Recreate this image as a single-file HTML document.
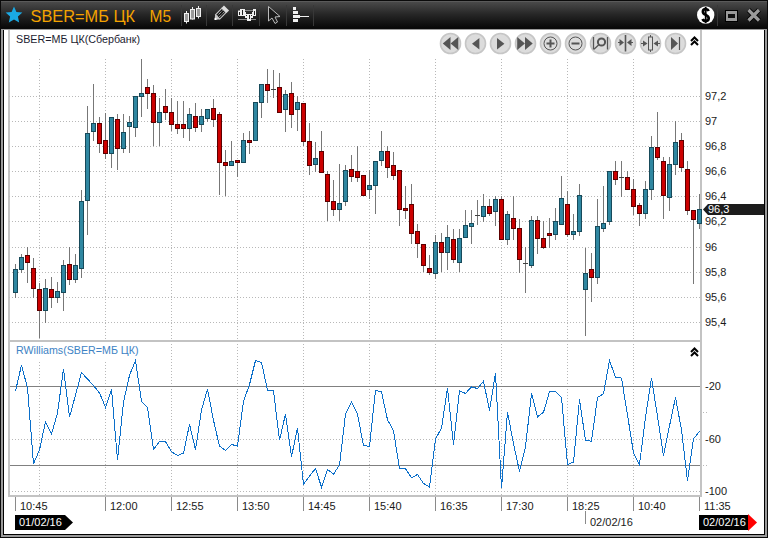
<!DOCTYPE html><html><head><meta charset="utf-8"><style>html,body{margin:0;padding:0;background:#0a0a0a;width:768px;height:538px;overflow:hidden}svg{display:block}text{font-family:"Liberation Sans",sans-serif}</style></head><body>
<svg width="768" height="538" viewBox="0 0 768 538">
<defs><linearGradient id="tb" x1="0" y1="0" x2="0" y2="1"><stop offset="0" stop-color="#4c4c4c"/><stop offset="0.5" stop-color="#262626"/><stop offset="1" stop-color="#080808"/></linearGradient></defs>
<g shape-rendering="crispEdges">
<rect x="0" y="0" width="768" height="538" fill="#0a0a0a"/>
<rect x="1" y="1" width="766" height="27" fill="url(#tb)"/>
<rect x="1" y="1" width="766" height="1" fill="#5a5a5a"/>
<rect x="1" y="29" width="766" height="508" fill="#9a9a9a"/>
<rect x="3" y="30" width="762" height="505" fill="#000"/>
<rect x="4" y="30" width="760" height="504" fill="#fff"/>
<rect x="8" y="30" width="2" height="467" fill="#c3c3c3"/>
<rect x="700" y="30" width="2" height="467" fill="#c3c3c3"/>
<rect x="8" y="495" width="694" height="2" fill="#c3c3c3"/>
<rect x="8" y="340" width="694" height="2" fill="#c3c3c3"/>
<line x1="9" y1="96.5" x2="700" y2="96.5" stroke="#b8b8b8" stroke-width="1" stroke-dasharray="1 2"/>
<line x1="9" y1="121.5" x2="700" y2="121.5" stroke="#b8b8b8" stroke-width="1" stroke-dasharray="1 2"/>
<line x1="9" y1="146.5" x2="700" y2="146.5" stroke="#b8b8b8" stroke-width="1" stroke-dasharray="1 2"/>
<line x1="9" y1="171.5" x2="700" y2="171.5" stroke="#b8b8b8" stroke-width="1" stroke-dasharray="1 2"/>
<line x1="9" y1="196.5" x2="700" y2="196.5" stroke="#b8b8b8" stroke-width="1" stroke-dasharray="1 2"/>
<line x1="9" y1="221.5" x2="700" y2="221.5" stroke="#b8b8b8" stroke-width="1" stroke-dasharray="1 2"/>
<line x1="9" y1="247.5" x2="700" y2="247.5" stroke="#b8b8b8" stroke-width="1" stroke-dasharray="1 2"/>
<line x1="9" y1="272.5" x2="700" y2="272.5" stroke="#b8b8b8" stroke-width="1" stroke-dasharray="1 2"/>
<line x1="9" y1="297.5" x2="700" y2="297.5" stroke="#b8b8b8" stroke-width="1" stroke-dasharray="1 2"/>
<line x1="9" y1="322.5" x2="700" y2="322.5" stroke="#b8b8b8" stroke-width="1" stroke-dasharray="1 2"/>
<line x1="39.5" y1="59" x2="39.5" y2="340" stroke="#b8b8b8" stroke-width="1" stroke-dasharray="1 2"/>
<line x1="39.5" y1="362" x2="39.5" y2="495" stroke="#b8b8b8" stroke-width="1" stroke-dasharray="1 2"/>
<line x1="105.5" y1="59" x2="105.5" y2="340" stroke="#b8b8b8" stroke-width="1" stroke-dasharray="1 2"/>
<line x1="105.5" y1="362" x2="105.5" y2="495" stroke="#b8b8b8" stroke-width="1" stroke-dasharray="1 2"/>
<line x1="171.5" y1="59" x2="171.5" y2="340" stroke="#b8b8b8" stroke-width="1" stroke-dasharray="1 2"/>
<line x1="171.5" y1="344" x2="171.5" y2="495" stroke="#b8b8b8" stroke-width="1" stroke-dasharray="1 2"/>
<line x1="237.5" y1="59" x2="237.5" y2="340" stroke="#b8b8b8" stroke-width="1" stroke-dasharray="1 2"/>
<line x1="237.5" y1="344" x2="237.5" y2="495" stroke="#b8b8b8" stroke-width="1" stroke-dasharray="1 2"/>
<line x1="303.5" y1="59" x2="303.5" y2="340" stroke="#b8b8b8" stroke-width="1" stroke-dasharray="1 2"/>
<line x1="303.5" y1="344" x2="303.5" y2="495" stroke="#b8b8b8" stroke-width="1" stroke-dasharray="1 2"/>
<line x1="369.5" y1="59" x2="369.5" y2="340" stroke="#b8b8b8" stroke-width="1" stroke-dasharray="1 2"/>
<line x1="369.5" y1="344" x2="369.5" y2="495" stroke="#b8b8b8" stroke-width="1" stroke-dasharray="1 2"/>
<line x1="435.5" y1="59" x2="435.5" y2="340" stroke="#b8b8b8" stroke-width="1" stroke-dasharray="1 2"/>
<line x1="435.5" y1="344" x2="435.5" y2="495" stroke="#b8b8b8" stroke-width="1" stroke-dasharray="1 2"/>
<line x1="501.5" y1="59" x2="501.5" y2="340" stroke="#b8b8b8" stroke-width="1" stroke-dasharray="1 2"/>
<line x1="501.5" y1="344" x2="501.5" y2="495" stroke="#b8b8b8" stroke-width="1" stroke-dasharray="1 2"/>
<line x1="567.5" y1="59" x2="567.5" y2="340" stroke="#b8b8b8" stroke-width="1" stroke-dasharray="1 2"/>
<line x1="567.5" y1="344" x2="567.5" y2="495" stroke="#b8b8b8" stroke-width="1" stroke-dasharray="1 2"/>
<line x1="633.5" y1="59" x2="633.5" y2="340" stroke="#b8b8b8" stroke-width="1" stroke-dasharray="1 2"/>
<line x1="633.5" y1="344" x2="633.5" y2="495" stroke="#b8b8b8" stroke-width="1" stroke-dasharray="1 2"/>
<line x1="9" y1="439.5" x2="700" y2="439.5" stroke="#b8b8b8" stroke-width="1" stroke-dasharray="1 2"/>
<line x1="9" y1="491.5" x2="700" y2="491.5" stroke="#b8b8b8" stroke-width="1" stroke-dasharray="1 2"/>
<rect x="703" y="412" width="1" height="1" fill="#b8b8b8"/><rect x="706" y="412" width="1" height="1" fill="#b8b8b8"/><rect x="703" y="465" width="1" height="1" fill="#b8b8b8"/><rect x="706" y="465" width="1" height="1" fill="#b8b8b8"/>
<rect x="10" y="386" width="690" height="1" fill="#808080"/>
<rect x="10" y="465" width="690" height="1" fill="#808080"/>
<rect x="15" y="264" width="1" height="34" fill="#777777"/>
<rect x="13" y="269" width="5" height="24" fill="#174a5a"/>
<rect x="14" y="270" width="3" height="22" fill="#2f87a1"/>
<rect x="21" y="254" width="1" height="19" fill="#777777"/>
<rect x="19" y="257" width="5" height="13" fill="#174a5a"/>
<rect x="20" y="258" width="3" height="11" fill="#2f87a1"/>
<rect x="27" y="247" width="1" height="36" fill="#777777"/>
<rect x="25" y="255" width="5" height="8" fill="#5c0000"/>
<rect x="26" y="256" width="3" height="6" fill="#cc0000"/>
<rect x="33" y="258" width="1" height="40" fill="#777777"/>
<rect x="31" y="268" width="5" height="21" fill="#5c0000"/>
<rect x="32" y="269" width="3" height="19" fill="#cc0000"/>
<rect x="39" y="283" width="1" height="55" fill="#777777"/>
<rect x="37" y="289" width="5" height="22" fill="#5c0000"/>
<rect x="38" y="290" width="3" height="20" fill="#cc0000"/>
<rect x="45" y="279" width="1" height="44" fill="#777777"/>
<rect x="43" y="288" width="5" height="23" fill="#174a5a"/>
<rect x="44" y="289" width="3" height="21" fill="#2f87a1"/>
<rect x="51" y="277" width="1" height="31" fill="#777777"/>
<rect x="49" y="289" width="5" height="9" fill="#5c0000"/>
<rect x="50" y="290" width="3" height="7" fill="#cc0000"/>
<rect x="57" y="282" width="1" height="21" fill="#777777"/>
<rect x="55" y="291" width="5" height="7" fill="#174a5a"/>
<rect x="56" y="292" width="3" height="5" fill="#2f87a1"/>
<rect x="63" y="260" width="1" height="51" fill="#777777"/>
<rect x="61" y="265" width="5" height="28" fill="#174a5a"/>
<rect x="62" y="266" width="3" height="26" fill="#2f87a1"/>
<rect x="69" y="247" width="1" height="38" fill="#777777"/>
<rect x="67" y="264" width="5" height="16" fill="#5c0000"/>
<rect x="68" y="265" width="3" height="14" fill="#cc0000"/>
<rect x="75" y="254" width="1" height="29" fill="#777777"/>
<rect x="73" y="265" width="5" height="15" fill="#174a5a"/>
<rect x="74" y="266" width="3" height="13" fill="#2f87a1"/>
<rect x="81" y="190" width="1" height="88" fill="#777777"/>
<rect x="79" y="201" width="5" height="68" fill="#174a5a"/>
<rect x="80" y="202" width="3" height="66" fill="#2f87a1"/>
<rect x="87" y="106" width="1" height="129" fill="#777777"/>
<rect x="85" y="133" width="5" height="68" fill="#174a5a"/>
<rect x="86" y="134" width="3" height="66" fill="#2f87a1"/>
<rect x="93" y="84" width="1" height="57" fill="#777777"/>
<rect x="91" y="123" width="5" height="9" fill="#174a5a"/>
<rect x="92" y="124" width="3" height="7" fill="#2f87a1"/>
<rect x="99" y="117" width="1" height="36" fill="#777777"/>
<rect x="97" y="123" width="5" height="21" fill="#5c0000"/>
<rect x="98" y="124" width="3" height="19" fill="#cc0000"/>
<rect x="105" y="113" width="1" height="46" fill="#777777"/>
<rect x="103" y="140" width="5" height="14" fill="#5c0000"/>
<rect x="104" y="141" width="3" height="12" fill="#cc0000"/>
<rect x="111" y="117" width="1" height="51" fill="#777777"/>
<rect x="109" y="117" width="5" height="37" fill="#174a5a"/>
<rect x="110" y="118" width="3" height="35" fill="#2f87a1"/>
<rect x="117" y="114" width="1" height="56" fill="#777777"/>
<rect x="115" y="119" width="5" height="30" fill="#5c0000"/>
<rect x="116" y="120" width="3" height="28" fill="#cc0000"/>
<rect x="123" y="114" width="1" height="39" fill="#777777"/>
<rect x="121" y="132" width="5" height="17" fill="#174a5a"/>
<rect x="122" y="133" width="3" height="15" fill="#2f87a1"/>
<rect x="129" y="116" width="1" height="37" fill="#777777"/>
<rect x="127" y="122" width="5" height="5" fill="#174a5a"/>
<rect x="128" y="123" width="3" height="3" fill="#2f87a1"/>
<rect x="135" y="96" width="1" height="41" fill="#777777"/>
<rect x="133" y="96" width="5" height="32" fill="#174a5a"/>
<rect x="134" y="97" width="3" height="30" fill="#2f87a1"/>
<rect x="141" y="59" width="1" height="58" fill="#777777"/>
<rect x="139" y="93" width="5" height="4" fill="#174a5a"/>
<rect x="140" y="94" width="3" height="2" fill="#2f87a1"/>
<rect x="147" y="79" width="1" height="30" fill="#777777"/>
<rect x="145" y="87" width="5" height="7" fill="#5c0000"/>
<rect x="146" y="88" width="3" height="5" fill="#cc0000"/>
<rect x="153" y="85" width="1" height="61" fill="#777777"/>
<rect x="151" y="93" width="5" height="30" fill="#5c0000"/>
<rect x="152" y="94" width="3" height="28" fill="#cc0000"/>
<rect x="159" y="98" width="1" height="48" fill="#777777"/>
<rect x="157" y="112" width="5" height="11" fill="#174a5a"/>
<rect x="158" y="113" width="3" height="9" fill="#2f87a1"/>
<rect x="165" y="89" width="1" height="31" fill="#777777"/>
<rect x="163" y="106" width="5" height="7" fill="#5c0000"/>
<rect x="164" y="107" width="3" height="5" fill="#cc0000"/>
<rect x="171" y="98" width="1" height="33" fill="#777777"/>
<rect x="169" y="112" width="5" height="13" fill="#5c0000"/>
<rect x="170" y="113" width="3" height="11" fill="#cc0000"/>
<rect x="177" y="101" width="1" height="33" fill="#777777"/>
<rect x="175" y="124" width="5" height="5" fill="#5c0000"/>
<rect x="176" y="125" width="3" height="3" fill="#cc0000"/>
<rect x="183" y="101" width="1" height="37" fill="#777777"/>
<rect x="181" y="124" width="5" height="5" fill="#5c0000"/>
<rect x="182" y="125" width="3" height="3" fill="#cc0000"/>
<rect x="189" y="108" width="1" height="33" fill="#777777"/>
<rect x="187" y="114" width="5" height="15" fill="#174a5a"/>
<rect x="188" y="115" width="3" height="13" fill="#2f87a1"/>
<rect x="195" y="103" width="1" height="29" fill="#777777"/>
<rect x="193" y="116" width="5" height="12" fill="#5c0000"/>
<rect x="194" y="117" width="3" height="10" fill="#cc0000"/>
<rect x="201" y="109" width="1" height="23" fill="#777777"/>
<rect x="199" y="116" width="5" height="9" fill="#174a5a"/>
<rect x="200" y="117" width="3" height="7" fill="#2f87a1"/>
<rect x="207" y="109" width="1" height="13" fill="#777777"/>
<rect x="205" y="109" width="5" height="10" fill="#174a5a"/>
<rect x="206" y="110" width="3" height="8" fill="#2f87a1"/>
<rect x="213" y="99" width="1" height="28" fill="#777777"/>
<rect x="211" y="108" width="5" height="12" fill="#5c0000"/>
<rect x="212" y="109" width="3" height="10" fill="#cc0000"/>
<rect x="219" y="112" width="1" height="83" fill="#777777"/>
<rect x="217" y="114" width="5" height="49" fill="#5c0000"/>
<rect x="218" y="115" width="3" height="47" fill="#cc0000"/>
<rect x="225" y="150" width="1" height="46" fill="#777777"/>
<rect x="223" y="162" width="5" height="4" fill="#5c0000"/>
<rect x="224" y="163" width="3" height="2" fill="#cc0000"/>
<rect x="231" y="141" width="1" height="25" fill="#777777"/>
<rect x="229" y="161" width="5" height="5" fill="#174a5a"/>
<rect x="230" y="162" width="3" height="3" fill="#2f87a1"/>
<rect x="237" y="160" width="1" height="17" fill="#777777"/>
<rect x="235" y="160" width="5" height="3" fill="#5c0000"/>
<rect x="236" y="161" width="3" height="1" fill="#cc0000"/>
<rect x="243" y="133" width="1" height="30" fill="#777777"/>
<rect x="241" y="140" width="5" height="23" fill="#174a5a"/>
<rect x="242" y="141" width="3" height="21" fill="#2f87a1"/>
<rect x="249" y="131" width="1" height="23" fill="#777777"/>
<rect x="247" y="140" width="5" height="3" fill="#5c0000"/>
<rect x="248" y="141" width="3" height="1" fill="#cc0000"/>
<rect x="255" y="102" width="1" height="39" fill="#777777"/>
<rect x="253" y="102" width="5" height="39" fill="#174a5a"/>
<rect x="254" y="103" width="3" height="37" fill="#2f87a1"/>
<rect x="261" y="84" width="1" height="34" fill="#777777"/>
<rect x="259" y="84" width="5" height="19" fill="#174a5a"/>
<rect x="260" y="85" width="3" height="17" fill="#2f87a1"/>
<rect x="267" y="69" width="1" height="34" fill="#777777"/>
<rect x="265" y="84" width="5" height="7" fill="#5c0000"/>
<rect x="266" y="85" width="3" height="5" fill="#cc0000"/>
<rect x="273" y="70" width="1" height="28" fill="#777777"/>
<rect x="271" y="89" width="5" height="1" fill="#404040"/>
<rect x="279" y="73" width="1" height="40" fill="#777777"/>
<rect x="277" y="87" width="5" height="26" fill="#5c0000"/>
<rect x="278" y="88" width="3" height="24" fill="#cc0000"/>
<rect x="285" y="90" width="1" height="42" fill="#777777"/>
<rect x="283" y="94" width="5" height="16" fill="#174a5a"/>
<rect x="284" y="95" width="3" height="14" fill="#2f87a1"/>
<rect x="291" y="82" width="1" height="46" fill="#777777"/>
<rect x="289" y="93" width="5" height="22" fill="#5c0000"/>
<rect x="290" y="94" width="3" height="20" fill="#cc0000"/>
<rect x="297" y="96" width="1" height="35" fill="#777777"/>
<rect x="295" y="102" width="5" height="8" fill="#174a5a"/>
<rect x="296" y="103" width="3" height="6" fill="#2f87a1"/>
<rect x="303" y="103" width="1" height="43" fill="#777777"/>
<rect x="301" y="103" width="5" height="39" fill="#5c0000"/>
<rect x="302" y="104" width="3" height="37" fill="#cc0000"/>
<rect x="309" y="123" width="1" height="52" fill="#777777"/>
<rect x="307" y="141" width="5" height="25" fill="#5c0000"/>
<rect x="308" y="142" width="3" height="23" fill="#cc0000"/>
<rect x="315" y="142" width="1" height="30" fill="#777777"/>
<rect x="313" y="158" width="5" height="7" fill="#174a5a"/>
<rect x="314" y="159" width="3" height="5" fill="#2f87a1"/>
<rect x="321" y="131" width="1" height="42" fill="#777777"/>
<rect x="319" y="151" width="5" height="22" fill="#5c0000"/>
<rect x="320" y="152" width="3" height="20" fill="#cc0000"/>
<rect x="327" y="171" width="1" height="50" fill="#777777"/>
<rect x="325" y="174" width="5" height="28" fill="#5c0000"/>
<rect x="326" y="175" width="3" height="26" fill="#cc0000"/>
<rect x="333" y="180" width="1" height="36" fill="#777777"/>
<rect x="331" y="201" width="5" height="9" fill="#5c0000"/>
<rect x="332" y="202" width="3" height="7" fill="#cc0000"/>
<rect x="339" y="164" width="1" height="57" fill="#777777"/>
<rect x="337" y="203" width="5" height="7" fill="#174a5a"/>
<rect x="338" y="204" width="3" height="5" fill="#2f87a1"/>
<rect x="345" y="165" width="1" height="41" fill="#777777"/>
<rect x="343" y="170" width="5" height="32" fill="#174a5a"/>
<rect x="344" y="171" width="3" height="30" fill="#2f87a1"/>
<rect x="351" y="155" width="1" height="27" fill="#777777"/>
<rect x="349" y="169" width="5" height="8" fill="#5c0000"/>
<rect x="350" y="170" width="3" height="6" fill="#cc0000"/>
<rect x="357" y="146" width="1" height="36" fill="#777777"/>
<rect x="355" y="171" width="5" height="7" fill="#5c0000"/>
<rect x="356" y="172" width="3" height="5" fill="#cc0000"/>
<rect x="363" y="175" width="1" height="21" fill="#777777"/>
<rect x="361" y="175" width="5" height="21" fill="#5c0000"/>
<rect x="362" y="176" width="3" height="19" fill="#cc0000"/>
<rect x="369" y="170" width="1" height="29" fill="#777777"/>
<rect x="367" y="185" width="5" height="5" fill="#174a5a"/>
<rect x="368" y="186" width="3" height="3" fill="#2f87a1"/>
<rect x="375" y="161" width="1" height="53" fill="#777777"/>
<rect x="373" y="161" width="5" height="25" fill="#174a5a"/>
<rect x="374" y="162" width="3" height="23" fill="#2f87a1"/>
<rect x="381" y="131" width="1" height="35" fill="#777777"/>
<rect x="379" y="151" width="5" height="10" fill="#174a5a"/>
<rect x="380" y="152" width="3" height="8" fill="#2f87a1"/>
<rect x="387" y="146" width="1" height="32" fill="#777777"/>
<rect x="385" y="151" width="5" height="17" fill="#5c0000"/>
<rect x="386" y="152" width="3" height="15" fill="#cc0000"/>
<rect x="393" y="152" width="1" height="28" fill="#777777"/>
<rect x="391" y="165" width="5" height="11" fill="#5c0000"/>
<rect x="392" y="166" width="3" height="9" fill="#cc0000"/>
<rect x="399" y="170" width="1" height="56" fill="#777777"/>
<rect x="397" y="170" width="5" height="40" fill="#5c0000"/>
<rect x="398" y="171" width="3" height="38" fill="#cc0000"/>
<rect x="405" y="186" width="1" height="33" fill="#777777"/>
<rect x="403" y="208" width="5" height="3" fill="#5c0000"/>
<rect x="404" y="209" width="3" height="1" fill="#cc0000"/>
<rect x="411" y="184" width="1" height="60" fill="#777777"/>
<rect x="409" y="204" width="5" height="30" fill="#5c0000"/>
<rect x="410" y="205" width="3" height="28" fill="#cc0000"/>
<rect x="417" y="224" width="1" height="34" fill="#777777"/>
<rect x="415" y="231" width="5" height="13" fill="#5c0000"/>
<rect x="416" y="232" width="3" height="11" fill="#cc0000"/>
<rect x="423" y="244" width="1" height="28" fill="#777777"/>
<rect x="421" y="244" width="5" height="22" fill="#5c0000"/>
<rect x="422" y="245" width="3" height="20" fill="#cc0000"/>
<rect x="429" y="255" width="1" height="20" fill="#777777"/>
<rect x="427" y="268" width="5" height="5" fill="#5c0000"/>
<rect x="428" y="269" width="3" height="3" fill="#cc0000"/>
<rect x="435" y="235" width="1" height="44" fill="#777777"/>
<rect x="433" y="242" width="5" height="32" fill="#174a5a"/>
<rect x="434" y="243" width="3" height="30" fill="#2f87a1"/>
<rect x="441" y="233" width="1" height="39" fill="#777777"/>
<rect x="439" y="242" width="5" height="11" fill="#5c0000"/>
<rect x="440" y="243" width="3" height="9" fill="#cc0000"/>
<rect x="447" y="225" width="1" height="45" fill="#777777"/>
<rect x="445" y="237" width="5" height="16" fill="#174a5a"/>
<rect x="446" y="238" width="3" height="14" fill="#2f87a1"/>
<rect x="453" y="229" width="1" height="34" fill="#777777"/>
<rect x="451" y="239" width="5" height="21" fill="#5c0000"/>
<rect x="452" y="240" width="3" height="19" fill="#cc0000"/>
<rect x="459" y="229" width="1" height="43" fill="#777777"/>
<rect x="457" y="238" width="5" height="25" fill="#174a5a"/>
<rect x="458" y="239" width="3" height="23" fill="#2f87a1"/>
<rect x="465" y="210" width="1" height="28" fill="#777777"/>
<rect x="463" y="225" width="5" height="13" fill="#174a5a"/>
<rect x="464" y="226" width="3" height="11" fill="#2f87a1"/>
<rect x="471" y="210" width="1" height="34" fill="#777777"/>
<rect x="469" y="223" width="5" height="4" fill="#174a5a"/>
<rect x="470" y="224" width="3" height="2" fill="#2f87a1"/>
<rect x="477" y="200" width="1" height="25" fill="#777777"/>
<rect x="475" y="215" width="5" height="1" fill="#404040"/>
<rect x="483" y="194" width="1" height="28" fill="#777777"/>
<rect x="481" y="206" width="5" height="11" fill="#174a5a"/>
<rect x="482" y="207" width="3" height="9" fill="#2f87a1"/>
<rect x="489" y="199" width="1" height="17" fill="#777777"/>
<rect x="487" y="206" width="5" height="8" fill="#5c0000"/>
<rect x="488" y="207" width="3" height="6" fill="#cc0000"/>
<rect x="495" y="196" width="1" height="30" fill="#777777"/>
<rect x="493" y="199" width="5" height="13" fill="#174a5a"/>
<rect x="494" y="200" width="3" height="11" fill="#2f87a1"/>
<rect x="501" y="196" width="1" height="44" fill="#777777"/>
<rect x="499" y="199" width="5" height="41" fill="#5c0000"/>
<rect x="500" y="200" width="3" height="39" fill="#cc0000"/>
<rect x="507" y="211" width="1" height="34" fill="#777777"/>
<rect x="505" y="214" width="5" height="26" fill="#174a5a"/>
<rect x="506" y="215" width="3" height="24" fill="#2f87a1"/>
<rect x="513" y="196" width="1" height="44" fill="#777777"/>
<rect x="511" y="218" width="5" height="11" fill="#5c0000"/>
<rect x="512" y="219" width="3" height="9" fill="#cc0000"/>
<rect x="519" y="219" width="1" height="54" fill="#777777"/>
<rect x="517" y="228" width="5" height="32" fill="#5c0000"/>
<rect x="518" y="229" width="3" height="30" fill="#cc0000"/>
<rect x="525" y="247" width="1" height="46" fill="#777777"/>
<rect x="523" y="263" width="5" height="1" fill="#404040"/>
<rect x="531" y="216" width="1" height="52" fill="#777777"/>
<rect x="529" y="220" width="5" height="46" fill="#174a5a"/>
<rect x="530" y="221" width="3" height="44" fill="#2f87a1"/>
<rect x="537" y="216" width="1" height="38" fill="#777777"/>
<rect x="535" y="220" width="5" height="19" fill="#5c0000"/>
<rect x="536" y="221" width="3" height="17" fill="#cc0000"/>
<rect x="543" y="221" width="1" height="28" fill="#777777"/>
<rect x="541" y="238" width="5" height="10" fill="#5c0000"/>
<rect x="542" y="239" width="3" height="8" fill="#cc0000"/>
<rect x="549" y="218" width="1" height="30" fill="#777777"/>
<rect x="547" y="233" width="5" height="3" fill="#5c0000"/>
<rect x="548" y="234" width="3" height="1" fill="#cc0000"/>
<rect x="555" y="208" width="1" height="32" fill="#777777"/>
<rect x="553" y="221" width="5" height="14" fill="#174a5a"/>
<rect x="554" y="222" width="3" height="12" fill="#2f87a1"/>
<rect x="561" y="176" width="1" height="49" fill="#777777"/>
<rect x="559" y="198" width="5" height="27" fill="#174a5a"/>
<rect x="560" y="199" width="3" height="25" fill="#2f87a1"/>
<rect x="567" y="191" width="1" height="46" fill="#777777"/>
<rect x="565" y="204" width="5" height="31" fill="#5c0000"/>
<rect x="566" y="205" width="3" height="29" fill="#cc0000"/>
<rect x="573" y="214" width="1" height="26" fill="#777777"/>
<rect x="571" y="231" width="5" height="4" fill="#174a5a"/>
<rect x="572" y="232" width="3" height="2" fill="#2f87a1"/>
<rect x="579" y="184" width="1" height="52" fill="#777777"/>
<rect x="577" y="195" width="5" height="37" fill="#174a5a"/>
<rect x="578" y="196" width="3" height="35" fill="#2f87a1"/>
<rect x="585" y="248" width="1" height="88" fill="#777777"/>
<rect x="583" y="273" width="5" height="17" fill="#174a5a"/>
<rect x="584" y="274" width="3" height="15" fill="#2f87a1"/>
<rect x="591" y="253" width="1" height="49" fill="#777777"/>
<rect x="589" y="269" width="5" height="9" fill="#5c0000"/>
<rect x="590" y="270" width="3" height="7" fill="#cc0000"/>
<rect x="597" y="199" width="1" height="85" fill="#777777"/>
<rect x="595" y="226" width="5" height="52" fill="#174a5a"/>
<rect x="596" y="227" width="3" height="50" fill="#2f87a1"/>
<rect x="603" y="186" width="1" height="46" fill="#777777"/>
<rect x="601" y="223" width="5" height="6" fill="#174a5a"/>
<rect x="602" y="224" width="3" height="4" fill="#2f87a1"/>
<rect x="609" y="171" width="1" height="54" fill="#777777"/>
<rect x="607" y="171" width="5" height="51" fill="#174a5a"/>
<rect x="608" y="172" width="3" height="49" fill="#2f87a1"/>
<rect x="615" y="161" width="1" height="24" fill="#777777"/>
<rect x="613" y="171" width="5" height="9" fill="#5c0000"/>
<rect x="614" y="172" width="3" height="7" fill="#cc0000"/>
<rect x="621" y="161" width="1" height="36" fill="#777777"/>
<rect x="619" y="177" width="5" height="1" fill="#404040"/>
<rect x="627" y="171" width="1" height="19" fill="#777777"/>
<rect x="625" y="177" width="5" height="13" fill="#5c0000"/>
<rect x="626" y="178" width="3" height="11" fill="#cc0000"/>
<rect x="633" y="179" width="1" height="36" fill="#777777"/>
<rect x="631" y="189" width="5" height="18" fill="#5c0000"/>
<rect x="632" y="190" width="3" height="16" fill="#cc0000"/>
<rect x="639" y="203" width="1" height="23" fill="#777777"/>
<rect x="637" y="205" width="5" height="9" fill="#5c0000"/>
<rect x="638" y="206" width="3" height="7" fill="#cc0000"/>
<rect x="645" y="181" width="1" height="38" fill="#777777"/>
<rect x="643" y="189" width="5" height="25" fill="#174a5a"/>
<rect x="644" y="190" width="3" height="23" fill="#2f87a1"/>
<rect x="651" y="136" width="1" height="64" fill="#777777"/>
<rect x="649" y="147" width="5" height="43" fill="#174a5a"/>
<rect x="650" y="148" width="3" height="41" fill="#2f87a1"/>
<rect x="657" y="112" width="1" height="48" fill="#777777"/>
<rect x="655" y="147" width="5" height="11" fill="#5c0000"/>
<rect x="656" y="148" width="3" height="9" fill="#cc0000"/>
<rect x="663" y="157" width="1" height="62" fill="#777777"/>
<rect x="661" y="161" width="5" height="35" fill="#5c0000"/>
<rect x="662" y="162" width="3" height="33" fill="#cc0000"/>
<rect x="669" y="157" width="1" height="54" fill="#777777"/>
<rect x="667" y="164" width="5" height="34" fill="#174a5a"/>
<rect x="668" y="165" width="3" height="32" fill="#2f87a1"/>
<rect x="675" y="121" width="1" height="54" fill="#777777"/>
<rect x="673" y="142" width="5" height="23" fill="#174a5a"/>
<rect x="674" y="143" width="3" height="21" fill="#2f87a1"/>
<rect x="681" y="133" width="1" height="39" fill="#777777"/>
<rect x="679" y="140" width="5" height="28" fill="#5c0000"/>
<rect x="680" y="141" width="3" height="26" fill="#cc0000"/>
<rect x="687" y="161" width="1" height="54" fill="#777777"/>
<rect x="685" y="169" width="5" height="42" fill="#5c0000"/>
<rect x="686" y="170" width="3" height="40" fill="#cc0000"/>
<rect x="693" y="210" width="1" height="74" fill="#777777"/>
<rect x="691" y="210" width="5" height="10" fill="#5c0000"/>
<rect x="692" y="211" width="3" height="8" fill="#cc0000"/>
<rect x="699" y="194" width="1" height="35" fill="#777777"/>
<rect x="697" y="209" width="5" height="15" fill="#174a5a"/>
<rect x="698" y="210" width="3" height="13" fill="#2f87a1"/>
</g>
<polyline points="15.5,391.0 21.5,365.2 27.5,388.0 33.5,463.8 39.5,449.9 45.5,421.7 51.5,434.2 57.5,412.9 63.5,369.0 69.5,417.3 75.5,395.0 81.5,372.6 87.5,379.0 93.5,385.5 99.5,393.0 105.5,407.2 111.5,389.2 117.5,460.0 123.5,402.0 129.5,375.3 135.5,360.5 141.5,401.2 147.5,407.5 153.5,449.5 159.5,441.6 165.5,441.6 171.5,451.8 177.5,455.5 183.5,453.2 189.5,424.4 195.5,449.5 201.5,410.0 207.5,389.2 213.5,420.3 219.5,446.2 225.5,450.3 231.5,444.4 237.5,446.2 243.5,401.2 249.5,384.6 255.5,360.5 261.5,362.4 267.5,390.1 273.5,391.0 279.5,440.3 285.5,414.0 291.5,456.6 297.5,428.3 303.5,484.3 309.5,476.0 315.5,468.6 321.5,487.1 327.5,469.5 333.5,474.2 339.5,464.9 345.5,414.2 351.5,402.1 357.5,414.2 363.5,445.5 369.5,446.4 375.5,390.1 381.5,392.0 387.5,419.7 393.5,430.7 399.5,468.6 405.5,468.6 411.5,477.8 417.5,474.5 423.5,483.4 429.5,487.1 435.5,439.0 441.5,428.0 447.5,388.3 453.5,444.6 459.5,391.0 465.5,393.4 471.5,386.8 477.5,388.6 483.5,381.2 489.5,410.5 495.5,373.1 501.5,488.0 507.5,412.3 513.5,443.6 519.5,471.4 525.5,447.0 531.5,393.4 537.5,416.9 543.5,412.3 549.5,391.6 555.5,391.6 561.5,397.3 567.5,464.5 573.5,462.1 579.5,399.4 585.5,440.5 591.5,441.2 597.5,397.5 603.5,393.8 609.5,360.5 615.5,377.2 621.5,378.1 627.5,415.0 633.5,452.9 639.5,464.5 645.5,417.0 651.5,378.1 657.5,416.5 663.5,455.7 669.5,426.0 675.5,397.5 681.5,430.0 687.5,480.6 693.5,439.0 699.5,431.3" fill="none" stroke="#0b6fca" stroke-width="1" shape-rendering="crispEdges"/>
<text x="705" y="100" font-size="11" fill="#1a1a1a">97,2</text>
<text x="705" y="125" font-size="11" fill="#1a1a1a">97</text>
<text x="705" y="150" font-size="11" fill="#1a1a1a">96,8</text>
<text x="705" y="175" font-size="11" fill="#1a1a1a">96,6</text>
<text x="705" y="200" font-size="11" fill="#1a1a1a">96,4</text>
<text x="705" y="225" font-size="11" fill="#1a1a1a">96,2</text>
<text x="705" y="251" font-size="11" fill="#1a1a1a">96</text>
<text x="705" y="276" font-size="11" fill="#1a1a1a">95,8</text>
<text x="705" y="301" font-size="11" fill="#1a1a1a">95,6</text>
<text x="705" y="326" font-size="11" fill="#1a1a1a">95,4</text>
<polygon points="703,209.5 708,204 764,204 764,215 708,215" fill="#1c1c1c"/>
<text x="708" y="212.5" font-size="11" fill="#fff">96,3</text>
<text x="705" y="390" font-size="11" fill="#1a1a1a">-20</text>
<text x="705" y="443" font-size="11" fill="#1a1a1a">-60</text>
<text x="705" y="495" font-size="11" fill="#1a1a1a">-100</text>
<text x="16" y="43" font-size="11" fill="#1c1c30" textLength="124" lengthAdjust="spacingAndGlyphs">SBER=МБ ЦК(Сбербанк)</text>
<text x="16" y="354" font-size="11" fill="#3d82c4" textLength="122.5" lengthAdjust="spacingAndGlyphs">RWilliams(SBER=МБ ЦК)</text>
<path d="M691 41 L694.5 37.5 L698 41 M691 45 L694.5 41.5 L698 45" fill="none" stroke="#000" stroke-width="2"/>
<path d="M691 352 L694.5 348.5 L698 352 M691 356 L694.5 352.5 L698 356" fill="none" stroke="#000" stroke-width="2"/>
<circle cx="450.5" cy="43.5" r="10" fill="#dcdcdc" stroke="#c6c6c6" stroke-width="1.6"/>
<circle cx="475.5" cy="43.5" r="10" fill="#dcdcdc" stroke="#c6c6c6" stroke-width="1.6"/>
<circle cx="500.5" cy="43.5" r="10" fill="#dcdcdc" stroke="#c6c6c6" stroke-width="1.6"/>
<circle cx="525.5" cy="43.5" r="10" fill="#dcdcdc" stroke="#c6c6c6" stroke-width="1.6"/>
<circle cx="550.5" cy="43.5" r="10" fill="#dcdcdc" stroke="#c6c6c6" stroke-width="1.6"/>
<circle cx="575.5" cy="43.5" r="10" fill="#dcdcdc" stroke="#c6c6c6" stroke-width="1.6"/>
<circle cx="600.5" cy="43.5" r="10" fill="#dcdcdc" stroke="#c6c6c6" stroke-width="1.6"/>
<circle cx="625.5" cy="43.5" r="10" fill="#dcdcdc" stroke="#c6c6c6" stroke-width="1.6"/>
<circle cx="650.5" cy="43.5" r="10" fill="#dcdcdc" stroke="#c6c6c6" stroke-width="1.6"/>
<circle cx="675.5" cy="43.5" r="10" fill="#dcdcdc" stroke="#c6c6c6" stroke-width="1.6"/>
<polygon points="442.8,43.5 450.5,37.0 450.5,50.0" fill="#555"/><polygon points="450.6,43.5 458.3,37.0 458.3,50.0" fill="#555"/>
<polygon points="472,43.8 479.4,38.05 479.4,49.55" fill="#555"/>
<polygon points="504.4,43.8 497,38.05 497,49.55" fill="#555"/>
<polygon points="524.9000000000001,43.5 517.2,37.0 517.2,50.0" fill="#555"/><polygon points="532.7,43.5 525,37.0 525,50.0" fill="#555"/>
<circle cx="550.5" cy="43.5" r="6.5" fill="none" stroke="#555" stroke-width="1"/><path d="M546.5 43.5 H554.5 M550.5 39.5 V47.5" stroke="#555" stroke-width="2"/>
<circle cx="575.5" cy="43.5" r="6.5" fill="none" stroke="#555" stroke-width="1"/><path d="M571.5 43.5 H579.5" stroke="#555" stroke-width="2"/>
<circle cx="601.5" cy="42" r="3.6" fill="none" stroke="#555" stroke-width="2"/><path d="M598.8 44.8 L594 49.3 M593.5 37 V49.5 M607.5 37 V49.5" stroke="#555" stroke-width="1.3"/>
<path d="M625.5 35 V51.5" stroke="#555" stroke-width="1.6"/><polygon points="624,42.5 619.5,39 619.5,46" fill="#555"/><polygon points="627,42.5 631.5,39 631.5,46" fill="#555"/><path d="M618 42.5 H620 M631 42.5 H633" stroke="#555" stroke-width="1.2"/>
<rect x="648.5" y="37" width="4" height="13" fill="none" stroke="#555" stroke-width="1"/><path d="M650.5 35 V37 M650.5 50 V52" stroke="#555" stroke-width="1"/><polygon points="647.5,43.5 643,40.5 643,46.5" fill="#555"/><polygon points="653.5,43.5 658,40.5 658,46.5" fill="#555"/><path d="M641 43.5 H644 M657 43.5 H660" stroke="#555" stroke-width="1"/>
<polygon points="671,37 671,50 678,43.5" fill="#555"/><path d="M679.5 37 V50" stroke="#555" stroke-width="1.2"/>
<g shape-rendering="crispEdges">
<rect x="15" y="497" width="1" height="14" fill="#8a8a8a"/>
<rect x="105" y="497" width="1" height="14" fill="#8a8a8a"/>
<rect x="171" y="497" width="1" height="14" fill="#8a8a8a"/>
<rect x="237" y="497" width="1" height="14" fill="#8a8a8a"/>
<rect x="303" y="497" width="1" height="14" fill="#8a8a8a"/>
<rect x="369" y="497" width="1" height="14" fill="#8a8a8a"/>
<rect x="435" y="497" width="1" height="14" fill="#8a8a8a"/>
<rect x="501" y="497" width="1" height="14" fill="#8a8a8a"/>
<rect x="567" y="497" width="1" height="14" fill="#8a8a8a"/>
<rect x="633" y="497" width="1" height="14" fill="#8a8a8a"/>
<rect x="699" y="497" width="1" height="14" fill="#8a8a8a"/>
<rect x="585" y="511" width="1" height="13" fill="#8a8a8a"/>
</g>
<text x="20" y="510" font-size="11" fill="#1a1a1a">10:45</text>
<text x="110" y="510" font-size="11" fill="#1a1a1a">12:00</text>
<text x="176" y="510" font-size="11" fill="#1a1a1a">12:55</text>
<text x="242" y="510" font-size="11" fill="#1a1a1a">13:50</text>
<text x="308" y="510" font-size="11" fill="#1a1a1a">14:45</text>
<text x="374" y="510" font-size="11" fill="#1a1a1a">15:40</text>
<text x="440" y="510" font-size="11" fill="#1a1a1a">16:35</text>
<text x="506" y="510" font-size="11" fill="#1a1a1a">17:30</text>
<text x="572" y="510" font-size="11" fill="#1a1a1a">18:25</text>
<text x="638" y="510" font-size="11" fill="#1a1a1a">10:40</text>
<text x="704" y="510" font-size="11" fill="#1a1a1a">11:35</text>
<text x="590" y="526" font-size="11" fill="#1a1a1a">02/02/16</text>
<polygon points="15,515 65,515 73,522.5 65,530 15,530" fill="#000"/>
<text x="19" y="526" font-size="11" fill="#fff">01/02/16</text>
<rect x="699" y="515" width="50" height="15" fill="#000"/>
<polygon points="748,514 757,522.5 748,531" fill="#ff0000"/>
<text x="703" y="526" font-size="11" fill="#fff">02/02/16</text>
<polygon points="14.00,6.50 16.41,11.98 22.37,12.58 17.90,16.57 19.17,22.42 14.00,19.40 8.83,22.42 10.10,16.57 5.63,12.58 11.59,11.98" fill="#1aa9e4"/>
<text x="30.5" y="21.5" font-size="16.5" fill="#f4a300" textLength="104.5" lengthAdjust="spacingAndGlyphs">SBER=МБ ЦК</text>
<text x="149.5" y="21.5" font-size="16.5" fill="#f4a300" textLength="21.5" lengthAdjust="spacingAndGlyphs">M5</text>
<g shape-rendering="crispEdges">
<rect x="181" y="5" width="1" height="21" fill="#383838"/>
<rect x="206" y="5" width="1" height="21" fill="#383838"/>
<rect x="232" y="5" width="1" height="21" fill="#383838"/>
<rect x="259" y="5" width="1" height="21" fill="#383838"/>
<rect x="286" y="5" width="1" height="21" fill="#383838"/>
<rect x="313" y="5" width="1" height="21" fill="#383838"/>
<rect x="717" y="5" width="1" height="21" fill="#383838"/>
</g>
<path d="M186.5 11 V23.5 M192.5 7 V19.5 M198.5 6 V18.5" stroke="#f0f0f0" stroke-width="1"/>
<rect x="184.5" y="13.5" width="4" height="8" fill="#9a9a9a" stroke="#f0f0f0"/>
<rect x="190.5" y="9.5" width="4" height="9.5" fill="#9a9a9a" stroke="#f0f0f0"/>
<rect x="196.5" y="8.5" width="4" height="8" fill="#9a9a9a" stroke="#f0f0f0"/>
<g transform="translate(220.5,14) rotate(-45)"><polygon points="-8.5,0 -4,-3.5 -4,3.5" fill="#c8c8c8"/><circle cx="-7" cy="0" r="1.1" fill="#fff"/><rect x="-4" y="-3" width="9" height="6" fill="#151515" stroke="#c8c8c8" stroke-width="1.1"/><path d="M-3 -1 H4.5 M-3 1.2 H4.5" stroke="#eee" stroke-width="0.9" stroke-dasharray="1 0.9"/><rect x="5" y="-3.6" width="3.5" height="7.2" fill="#dedede"/></g>
<path d="M238 10.5 H256 M238 19.5 H256" stroke="#8a8a8a" stroke-width="1"/>
<g fill="#f0f0f0" shape-rendering="crispEdges"><rect x="238" y="11" width="3" height="5"/><rect x="240" y="9" width="5" height="7"/><rect x="244" y="12" width="2" height="4"/><rect x="245" y="14" width="3" height="4"/><rect x="247" y="14" width="4" height="7"/><rect x="250" y="14" width="3" height="4"/><rect x="252" y="12" width="2" height="4"/><rect x="253" y="9" width="3" height="7"/></g>
<g fill="#222" shape-rendering="crispEdges"><rect x="239" y="12" width="1" height="3"/><rect x="242" y="10" width="1" height="5"/><rect x="249" y="15" width="1" height="4"/><rect x="254" y="11" width="1" height="4"/><rect x="246" y="15" width="1" height="1"/><rect x="251" y="15" width="1" height="1"/></g>
<path d="M268.5 6.5 V21 L272 18 L275 23.5 L277.5 22 L275 17 L280 16.5 Z" fill="#1a1a1a" stroke="#bbb" stroke-width="1"/>
<g fill="#f0f0f0"><rect x="293" y="7" width="3" height="3"/><rect x="293" y="11" width="5" height="3"/><rect x="293" y="15" width="7" height="3"/><rect x="293" y="19" width="5" height="3"/><rect x="300" y="16" width="9" height="1"/></g>
<circle cx="705.7" cy="15" r="8.7" fill="#fff"/>
<path d="M708.7 11 C708.2 9.8 707 9.1 705.7 9.1 C704 9.1 702.9 10.1 702.9 11.7 C702.9 15.2 708.7 14.6 708.7 18.2 C708.7 19.9 707.4 20.9 705.7 20.9 C704.2 20.9 703.1 20.2 702.6 18.9" fill="none" stroke="#000" stroke-width="2.7"/><path d="M705.7 6.8 V23.2" stroke="#000" stroke-width="1.8"/>
<rect x="725.5" y="10.5" width="12" height="11" fill="#9a9a9a" stroke="#000" stroke-width="1"/><rect x="728" y="14" width="7" height="4" fill="#111"/>
<path d="M748.5 10 L759 20.5 M759 10 L748.5 20.5" stroke="#000" stroke-width="5.2"/><path d="M748.5 10 L759 20.5 M759 10 L748.5 20.5" stroke="#9a9a9a" stroke-width="3.2"/>
</svg></body></html>
